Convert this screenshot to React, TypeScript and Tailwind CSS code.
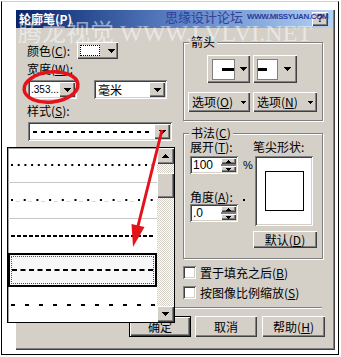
import React from 'react';

const font = "font-['Noto_Sans_CJK_SC','Liberation_Sans',sans-serif]";
const raised = 'shadow-[inset_1px_1px_0_#ffffff,inset_-1px_-1px_0_#404040,inset_-2px_-2px_0_#808080]';
const sunken = 'shadow-[inset_1px_1px_0_#808080,inset_-1px_-1px_0_#ffffff,inset_2px_2px_0_#404040,inset_-2px_-2px_0_#d4d0c8]';
const checker = 'bg-[repeating-conic-gradient(#d4d0c8_0_25%,#ffffff_0_50%)] bg-[length:2px_2px]';

function Tri({ up = false, small = false }: { up?: boolean; small?: boolean }) {
  if (small) {
    return (
      <svg width="5" height="3" viewBox="0 0 5 3" className="block">
        <path d={up ? 'M2 0h1v1h1v1h1v1H0V2h1V1h1z' : 'M0 0h5v1H4v1H3v1H2V2H1V1H0z'} fill="#000" />
      </svg>
    );
  }
  return (
    <svg width="7" height="4" viewBox="0 0 7 4" className="block">
      <path d={up ? 'M3 0h1v1h1v1h1v1h1v1H0V3h1V2h1V1h1z' : 'M0 0h7v1H6v1H5v1H4v1H3V3H2V2H1V1H0z'} fill="#000" />
    </svg>
  );
}

function Line({ dash, w, offset = 0, color = '#000', thick = 2 }: { dash: string; w: number; offset?: number; color?: string; thick?: number }) {
  return (
    <svg width={w} height={thick} className="block">
      <line x1={offset} y1={thick / 2} x2={w} y2={thick / 2} stroke={color} strokeWidth={thick} strokeDasharray={dash} />
    </svg>
  );
}

function Combo({ w, children }: { w: string; children: React.ReactNode }) {
  return (
    <div className={`flex h-[19px] bg-white p-[2px] ${sunken} ${w}`}>
      <div className="flex flex-1 items-center pl-[1px]">{children}</div>
      <div className={`flex h-[15px] w-[16px] items-center justify-center bg-[#d4d0c8] ${raised}`}>
        <Tri />
      </div>
    </div>
  );
}

function Spin({ value }: { value: string }) {
  return (
    <div className={`flex h-[18px] w-[48px] bg-white p-[2px] ${sunken}`}>
      <span className="flex-1 pl-[1px] font-['Liberation_Sans',sans-serif] text-[12px] leading-[14px]">{value}</span>
      <div className="flex w-[15px] flex-col gap-[2px] bg-[#808080]">
        <div className={`flex flex-1 items-center justify-center bg-[#d4d0c8] ${raised}`}>
          <Tri up small />
        </div>
        <div className={`flex flex-1 items-center justify-center bg-[#d4d0c8] ${raised}`}>
          <Tri small />
        </div>
      </div>
    </div>
  );
}

function LeftColumn() {
  return (
    <div className="w-[156px] pt-[14px]">
      <div className="flex h-[17px] items-center">
        <span className="w-[50px]">颜色(<u>C</u>):</span>
        <div className={`flex h-[17px] w-[41px] items-center bg-[#d4d0c8] pl-[3px] ${raised}`}>
          <div className="h-[11px] w-[20px] border border-dotted border-black bg-white" />
          <div className="ml-[8px]">
            <Tri />
          </div>
        </div>
      </div>
      <div className="mt-[4px] h-[12px]">宽度(<u>W</u>):</div>
      <div className="mt-[5px] flex">
        <div className="ml-[1px]">
          <Combo w="w-[49px]">
            <span className="whitespace-nowrap font-['Liberation_Sans',sans-serif] text-[10px] leading-[13px]">.353...</span>
          </Combo>
        </div>
        <div className="ml-[17px]">
          <Combo w="w-[73px]">
            <span className="pl-[1px] text-[12px] leading-[13px]">毫米</span>
          </Combo>
        </div>
      </div>
      <div className="mt-[6px] h-[12px]">样式(<u>S</u>):</div>
      <div className="ml-[1px] mt-[5px]">
        <Combo w="w-[144px]">
          <div className="pl-[2px]">
            <Line dash="4 4" w={118} />
          </div>
        </Combo>
      </div>
    </div>
  );
}

function ArrowPick({ w, box, lineLeft, lineW, gap }: { w: string; box: string; lineLeft: string; lineW: string; gap: string }) {
  return (
    <div className={`flex h-[28px] items-center bg-[#d4d0c8] ${raised} ${w}`}>
      <div className={`flex h-[21px] items-center border border-[#808080] bg-white ${box}`}>
        <div className={`h-[3px] bg-black ${lineLeft} ${lineW}`} />
      </div>
      <div className={gap}>
        <Tri />
      </div>
    </div>
  );
}

function OptionButton({ w, label, accel, arrowGap }: { w: string; label: string; accel: string; arrowGap: string }) {
  return (
    <div className={`flex h-[20px] items-center bg-[#d4d0c8] pl-[4px] ${raised} ${w}`}>
      <span className="leading-[14px]">
        {label}(<u>{accel}</u>)
      </span>
      <div className={arrowGap}>
        <Tri small />
      </div>
    </div>
  );
}

const groupBox = 'border border-[#808080] shadow-[1px_1px_0_#ffffff,inset_1px_1px_0_#ffffff]';

function RightColumn() {
  return (
    <div className="w-[140px] pt-[8px]">
      <fieldset className={`${groupBox} pb-[8px]`}>
        <legend className="ml-[5px] bg-[#d4d0c8] px-[2px] leading-[12px]">箭头</legend>
        <div className="mt-[7px] flex gap-[3px] pl-[23px]">
          <ArrowPick w="w-[43px]" box="ml-[5px] w-[23px]" lineLeft="ml-[9px]" lineW="w-[12px]" gap="ml-[5px]" />
          <ArrowPick w="w-[44px]" box="ml-[4px] w-[21px]" lineLeft="ml-0" lineW="w-[9px]" gap="ml-[6px]" />
        </div>
        <div className="mt-[9px] flex gap-[3px] pl-[4px]">
          <OptionButton w="w-[62px]" label="选项" accel="O" arrowGap="ml-[8px]" />
          <OptionButton w="w-[64px]" label="选项" accel="N" arrowGap="ml-[10px]" />
        </div>
      </fieldset>

      <fieldset className={`${groupBox} mt-[6px] pb-[10px]`}>
        <legend className="ml-[5px] bg-[#d4d0c8] px-[2px] leading-[12px]">
          书法(<u>C</u>)
        </legend>
        <div className="flex pl-[6px]">
          <div className="flex w-[63px] flex-col">
            <div className="mt-[2px] h-[12px]">
              展开(<u>T</u>):
            </div>
            <div className="mt-[3px] flex items-center">
              <Spin value="100" />
              <span className="ml-[5px] font-['Liberation_Sans',sans-serif] text-[11px]">%</span>
            </div>
            <div className="mt-[17px] flex h-[12px] items-end">
              <span className="w-[53px]">
                角度(<u>A</u>):
              </span>
              <div className="mb-[2px] h-[2px] w-[2px] bg-black" />
            </div>
            <div className="mt-[1px]">
              <Spin value=".0" />
            </div>
          </div>
          <div className="flex flex-col">
            <div className="mt-[2px] h-[12px]">笔尖形状:</div>
            <div className={`ml-[2px] mt-[3px] flex h-[70px] w-[58px] items-center justify-center bg-white ${sunken}`}>
              <div className="h-[40px] w-[39px] border-[1.5px] border-black" />
            </div>
            <div className={`mt-[5px] flex h-[17px] w-[64px] items-center justify-center bg-[#d4d0c8] ${raised}`}>
              默认(<u>D</u>)
            </div>
          </div>
        </div>
      </fieldset>

      <div className="mt-[7px] flex h-[13px] items-center">
        <div className={`h-[13px] w-[13px] bg-white ${sunken}`} />
        <span className="ml-[4px]">
          置于填充之后(<u>B</u>)
        </span>
      </div>
      <div className="mt-[7px] flex h-[13px] items-center">
        <div className={`h-[13px] w-[13px] bg-white ${sunken}`} />
        <span className="ml-[4px]">
          按图像比例缩放(<u>S</u>)
        </span>
      </div>
    </div>
  );
}

function Dialog() {
  return (
    <div className="h-[340px] w-[319px] bg-[#d4d0c8] text-[12px] leading-[12px] text-black shadow-[inset_-1px_-1px_0_#404040,inset_-2px_-2px_0_#808080]">
      <div className="flex h-[18px] w-[317px] items-center bg-linear-to-r from-[#0a246a] via-[#5a80c4] to-[#b4d2f2] pl-[3px] pr-[5px]">
        <span className="text-[12px] font-bold leading-[14px] text-white">轮廓笔(P)</span>
        <div className={`ml-auto flex h-[14px] w-[16px] items-center justify-center bg-[#d4d0c8] font-['Liberation_Sans',sans-serif] text-[10px] font-bold ${raised}`}>
          ?
        </div>
      </div>

      <div className="flex pl-[11px]">
        <LeftColumn />
        <RightColumn />
      </div>

      <div className="ml-[11px] mt-[8px] h-[2px] w-[295px] border-t border-b border-t-[#808080] border-b-white" />

      <div className="mt-[7px] flex pl-[113px]">
        <div className="h-[21px] w-[62px] border border-black">
          <div className={`flex h-full items-center justify-center ${raised}`}>确定</div>
        </div>
        <div className={`ml-[4px] flex h-[21px] w-[62px] items-center justify-center ${raised}`}>取消</div>
        <div className={`ml-[5px] flex h-[21px] w-[63px] items-center justify-center ${raised}`}>
          帮助(<u>H</u>)
        </div>
      </div>
    </div>
  );
}

function StylePopup() {
  return (
    <div className="absolute left-[7px] top-[147px] flex h-[176px] w-[168px] border border-black bg-white">
      <div className="flex w-[149px] flex-col shadow-[inset_1px_1px_0_#a0a0a0]">
        <div className="flex h-[34px] items-center">
          <Line dash="2 4.7" w={147} offset={3} />
        </div>
        <div className="h-[1px] bg-[#c8c8c8]" />
        <div className="flex h-[35px] flex-col justify-center">
          <Line dash="2 10.7" w={147} offset={3} />
          <Line dash="4 8.7" w={147} offset={7.5} color="#d8d8d8" thick={1} />
        </div>
        <div className="h-[1px] bg-[#c8c8c8]" />
        <div className="flex h-[34px] items-center">
          <Line dash="4 2" w={147} offset={3} />
        </div>
        <div className="flex h-[34px] items-center border-2 border-black bg-[#f7f7f7] p-[1px]">
          <div className="flex h-full w-full items-center border border-dotted border-[#505050]">
            <Line dash="5 3.5" w={141} offset={0} />
          </div>
        </div>
        <div className="flex h-[35px] items-center">
          <Line dash="4 10" w={147} offset={3} />
        </div>
      </div>
      <div className="flex w-[17px] flex-col">
        <div className={`flex h-[16px] items-center justify-center bg-[#d4d0c8] ${raised}`}>
          <Tri up />
        </div>
        <div className={`h-[9px] ${checker}`} />
        <div className={`h-[25px] bg-[#d4d0c8] ${raised}`} />
        <div className={`flex-1 ${checker}`} />
        <div className={`flex h-[16px] items-center justify-center bg-[#d4d0c8] ${raised}`}>
          <Tri />
        </div>
      </div>
    </div>
  );
}

function Watermarks() {
  return (
    <>
      <div className="pointer-events-none absolute left-[165px] top-[9px] flex items-center whitespace-nowrap">
        <span className="text-[13px] leading-[15px] text-[#34409a]">思缘设计论坛</span>
        <span className="ml-[4px] font-['Liberation_Sans',sans-serif] text-[8px] font-bold tracking-[-0.4px] text-[#2c3c9c]">
          WWW.MISSYUAN.COM
        </span>
      </div>
      <div className="pointer-events-none absolute left-[18px] top-[21px] whitespace-nowrap font-['Liberation_Serif','Noto_Sans_CJK_SC',serif] text-[24px] leading-[24px] text-white/50">
        腾龙视觉 WWW.LVLVI.NET
      </div>
    </>
  );
}

function Annotations() {
  return (
    <svg className="pointer-events-none absolute left-0 top-0" width="341" height="357">
      <ellipse cx="51" cy="87" rx="27" ry="15" transform="rotate(-6 51 87)" fill="none" stroke="#e3121b" strokeWidth="3.5" />
      <line x1="162" y1="130" x2="137" y2="230" stroke="#e3121b" strokeWidth="3" />
      <polygon points="133,247 144.5,227 131.5,224" fill="#e3121b" />
    </svg>
  );
}

export default function App() {
  return (
    <div className={`relative h-[357px] w-[341px] overflow-hidden bg-white p-[1px] ${font}`}>
      <div className="h-[354px] w-[338px] border border-black border-t-[#d0d0d0] pl-[14px] pt-[8px]">
        <Dialog />
      </div>
      <StylePopup />
      <Watermarks />
      <Annotations />
    </div>
  );
}
